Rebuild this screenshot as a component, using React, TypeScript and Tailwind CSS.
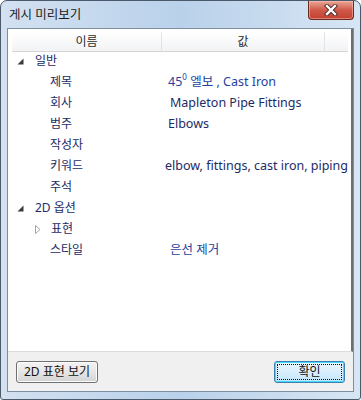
const rows = [
  { kind: "group", label: "일반" },
  { kind: "item", label: "제목", value: "45", sup: "0", rest: " 엘보 , Cast Iron", pad: "pl-[0px]", color: "text-[#2541a0]" },
  { kind: "item", label: "회사", value: "Mapleton Pipe Fittings", pad: "pl-[2px]" },
  { kind: "item", label: "범주", value: "Elbows", pad: "pl-[0px]" },
  { kind: "item", label: "작성자", value: "" },
  { kind: "item", label: "키워드", value: "elbow, fittings, cast iron, piping", pad: "ml-[-3px]" },
  { kind: "item", label: "주석", value: "" },
  { kind: "group", label: "2D 옵션" },
  { kind: "sub", label: "표현", value: "" },
  { kind: "item", label: "스타일", value: "은선 제거", pad: "pl-[2px]", color: "text-[#2541a0]" },
];

function Expanded() {
  return (
    <svg width="7" height="7" viewBox="0 0 7 7" className="shrink-0">
      <path d="M6.5 0.5 L6.5 6.5 L0.5 6.5 Z" fill="#3b3b3b" />
    </svg>
  );
}

function Collapsed() {
  return (
    <svg width="6" height="9" viewBox="0 0 6 9" className="shrink-0">
      <path d="M0.5 0.5 L5 4.5 L0.5 8.5 Z" fill="#ffffff" stroke="#a6a6a6" />
    </svg>
  );
}

function CloseButton() {
  return (
    <div className="w-[46px] h-[19px] rounded-b-[4px] border border-t-0 border-[#6b2a21] bg-gradient-to-b from-[#e8a797] via-[#d0594a] to-[#c2402f] flex items-center justify-center shadow-[inset_0_0_0_1px_rgba(255,200,190,0.5)]">
      <svg width="14" height="12" viewBox="0 0 14 12">
        <path d="M3 2 L11 10 M11 2 L3 10" stroke="#4a2a26" strokeWidth="4.2" strokeLinecap="square" />
        <path d="M3 2 L11 10 M11 2 L3 10" stroke="#ffffff" strokeWidth="2.4" strokeLinecap="square" />
      </svg>
    </div>
  );
}

export default function App() {
  return (
    <div
      className="w-[361px] h-[400px] flex flex-col rounded-t-[7px] rounded-b-[3px] border border-[#4b5a6b] bg-gradient-to-r from-[#d3e1f1] via-[#b9d1ea] to-[#d7e6f4] overflow-hidden"
      style={{ fontFamily: '"Noto Sans", "Noto Sans CJK KR", sans-serif' }}
    >
      {/* Title bar */}
      <div className="h-[27px] flex items-start shrink-0">
        <div className="pl-[8px] pt-[5px] text-[12.5px] text-[#1b1b1b]">게시 미리보기</div>
        <div className="ml-auto mr-[6px]">
          <CloseButton />
        </div>
      </div>

      {/* Client area */}
      <div className="mx-[6px] mb-[7px] flex-1 flex flex-col border border-[#7f8fa2] bg-[#f0f0f0]">
        {/* Property list */}
        <div className="h-[323px] bg-white border-b border-[#dcdcdc] pl-[4px] pr-[3px] pt-[3px] border-r-2 border-r-[#6e6e6e]">
          <div className="h-[20px] flex border-b border-[#d5d5d5] bg-gradient-to-b from-[#ffffff] to-[#f2f3f5] text-[12px] text-[#2b2b2b]">
            <div className="w-[150px] flex items-center justify-center border-r border-[#e2e3e6]">이름</div>
            <div className="w-[163px] flex items-center justify-center border-r border-[#e2e3e6]">값</div>
            <div className="flex-1" />
          </div>

          <div className="text-[12px] text-[#1c2b66]">
            {rows.map((r, i) => (
              <div key={i} className="h-[21px] flex items-center pb-[3px]">
                {r.kind === "group" ? (
                  <div className="flex items-center">
                    <div className="w-[5px]" />
                    <Expanded />
                    <div className="pl-[11px] whitespace-nowrap">{r.label}</div>
                  </div>
                ) : (
                  <>
                    <div className="w-[156px] flex items-center shrink-0">
                      {r.kind === "sub" ? (
                        <>
                          <div className="w-[23px]" />
                          <Collapsed />
                          <div className="pl-[10px]">{r.label}</div>
                        </>
                      ) : (
                        <div className="pl-[38px] whitespace-nowrap">{r.label}</div>
                      )}
                    </div>
                    <div className={`whitespace-nowrap text-[12.5px] ${r.pad ?? ""} ${r.color ?? "text-[#1c2b66]"}`}>
                      {r.value}
                      {r.sup && <span className="text-[8px] align-top leading-none">{r.sup}</span>}
                      {r.rest}
                    </div>
                  </>
                )}
              </div>
            ))}
          </div>
        </div>

        {/* Buttons */}
        <div className="flex-1 flex items-center justify-between pl-[8px] pr-[8px]">
          <button className="w-[82px] h-[22px] rounded-[3px] border border-[#707070] bg-gradient-to-b from-[#f3f3f3] via-[#e6e6e6] to-[#d3d3d3] shadow-[inset_0_0_0_1px_#fcfcfc] text-[12px] text-[#111] flex items-center justify-center">
            2D 표현 보기
          </button>
          <button className="w-[71px] h-[22px] rounded-[3px] border border-[#3c7fb1] bg-gradient-to-b from-[#eaf6fd] via-[#d9eefb] to-[#bee6fd] shadow-[inset_0_0_0_1px_#48d8fb] text-[12px] text-[#111] flex items-center justify-center p-[2px]">
            <div className="w-full h-full border border-dotted border-[#111] flex items-center justify-center">확인</div>
          </button>
        </div>
      </div>
    </div>
  );
}
